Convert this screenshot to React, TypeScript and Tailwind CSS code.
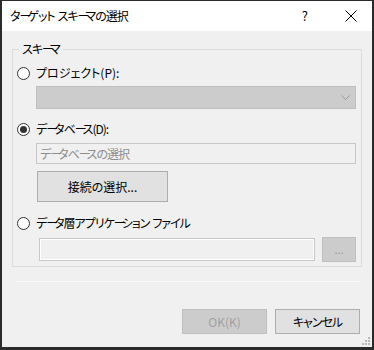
import React from 'react';

const font = "[font-family:'Noto_Sans_CJK_JP','Noto_Sans',sans-serif] [font-feature-settings:'palt']";

// Yu Gothic UI draws the long vowel mark much narrower than Noto does
const Jp = ({ t }: { t: string }) => (
  <>
    {t
      .replace(/ /g, '\u2004')
      .split('ー')
      .map((part, i, arr) => (
        <React.Fragment key={i}>
          {part}
          {i < arr.length - 1 && <span className="tracking-[-4px]">ー</span>}
        </React.Fragment>
      ))}
  </>
);

const Radio = ({ checked, label, tight }: { checked?: boolean; label: string; tight?: boolean }) => (
  <div className="flex items-center h-4 pl-[4px]">
    <span className="w-[13px] h-[13px] rounded-full border border-[#333333] bg-white flex items-center justify-center shrink-0">
      {checked && <span className="w-[7px] h-[7px] rounded-full bg-[#333333]" />}
    </span>
    <span className={`ml-[6px] text-[12px] leading-4 text-black whitespace-nowrap ${tight ? 'tracking-[-1px]' : ''}`}>
      <Jp t={label} />
    </span>
  </div>
);

export default function App() {
  return (
    <div className={`w-[374px] h-[350px] bg-[#2b2b2b] pt-px pl-[2px] pr-[2px] pb-[3px] ${font}`}>
      <div className="w-[370px] h-[346px] flex flex-col bg-[#f0f0f0]">
        {/* title bar */}
        <div className="h-[30px] bg-white flex items-center shrink-0">
          <span className="ml-[8px] text-[12px] text-black tracking-[-1px] whitespace-nowrap">
            <Jp t="ターゲット スキーマの選択" />
          </span>
          <span className="ml-auto text-[13px] text-black mr-[37px]">?</span>
          <svg width="12" height="12" viewBox="0 0 12 12" className="mr-[15px]">
            <path d="M0.5 0.5 L11.5 11.5 M11.5 0.5 L0.5 11.5" stroke="#000" strokeWidth="1" />
          </svg>
        </div>

        {/* group box */}
        <fieldset className="mt-[10px] mx-[10px] border border-[#dcdcdc] pb-[4px] pr-[5px]">
          <legend className="ml-[6px] px-[3px] text-[12px] leading-4 text-black tracking-[-1px]">
            <Jp t="スキーマ" />
          </legend>

          <div className="mt-[8px]">
            <Radio label="プロジェクト(P):" />
          </div>
          <div className="mt-[5px] ml-[23px] h-[23px] bg-[#cccccc] border border-[#bfbfbf] flex items-center justify-end pr-[5px]">
            <svg width="9" height="5" viewBox="0 0 9 5">
              <path d="M0.5 0.5 L4.5 4.5 L8.5 0.5" stroke="#9a9a9a" strokeWidth="1" fill="none" />
            </svg>
          </div>

          <div className="mt-[12px]">
            <Radio checked tight label="データベース(D):" />
          </div>
          <div className="mt-[6px] ml-[23px] h-[21px] bg-[#f0f0f0] border border-[#c8c8c8] flex items-center pl-[3px]">
            <span className="text-[12px] text-[#8d8d8d] tracking-[-1px]">
              <Jp t="データベースの選択" />
            </span>
          </div>
          <button className="mt-[7px] ml-[24px] w-[131px] h-[31px] bg-[#e1e1e1] border border-[#adadad] text-[12px] text-black flex items-center justify-center">
            接続の選択...
          </button>

          <div className="mt-[13px]">
            <Radio tight label="データ層アプリケーション ファイル" />
          </div>
          <div className="mt-[6px] flex items-center">
            <div className="ml-[26px] w-[276px] h-[23px] border border-[#c8c8c8] shadow-[inset_0_0_0_1px_#ffffff] bg-[#f0f0f0]" />
            <button className="ml-[7px] w-[34px] h-[25px] bg-[#cccccc] border border-[#bfbfbf] text-[11px] text-[#9a9a9a] flex items-center justify-center leading-none">
              ...
            </button>
          </div>
        </fieldset>

        <div className="mt-[14px] ml-[13px] w-[345px] h-px bg-[#fafafa]" />

        <div className="mt-[27px] flex justify-end gap-[8px] pr-[12px]">
          <button className="w-[85px] h-[25px] bg-[#cccccc] border border-[#bfbfbf] text-[12px] text-[#a0a0a0]">
            OK(K)
          </button>
          <button className="w-[85px] h-[25px] bg-[#e1e1e1] border border-[#adadad] text-[12px] text-black tracking-[-1px]">
            キャンセル
          </button>
        </div>

        <div className="mt-auto flex justify-end pr-[2px] pb-[2px]">
          <svg width="8" height="8" viewBox="0 0 8 8">
            <rect x="6" y="0" width="2" height="2" fill="#b8b8b8" />
            <rect x="3" y="3" width="2" height="2" fill="#b8b8b8" />
            <rect x="6" y="3" width="2" height="2" fill="#b8b8b8" />
            <rect x="0" y="6" width="2" height="2" fill="#b8b8b8" />
            <rect x="3" y="6" width="2" height="2" fill="#b8b8b8" />
            <rect x="6" y="6" width="2" height="2" fill="#b8b8b8" />
          </svg>
        </div>
      </div>
    </div>
  );
}
